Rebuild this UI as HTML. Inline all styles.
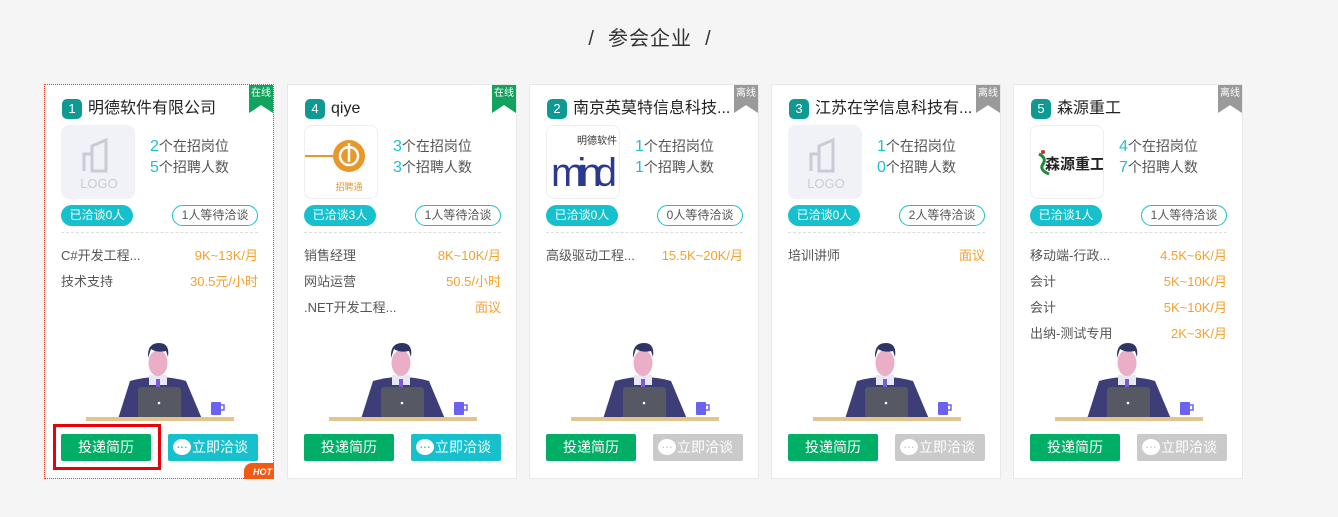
<!DOCTYPE html>
<html><head><meta charset="utf-8"><style>
*{margin:0;padding:0;box-sizing:border-box}
body{width:1338px;height:517px;background:#f5f5f5;font-family:"Liberation Sans","Noto Sans CJK SC",sans-serif;position:relative;overflow:hidden;color:#333}
.title{position:absolute;top:22px;left:0;width:1300px;text-align:center;font-size:20px;color:#333;letter-spacing:1px}
.card{position:absolute;top:84px;width:230px;height:395px;background:#fff;border:1px solid #e8e8e8}
.card.sel{border:1px dotted #ff3b1f}
.rib{position:absolute;right:0;top:0;width:24px;height:28px;color:#fff;font-size:10px;text-align:center;line-height:18px;clip-path:polygon(0 0,100% 0,100% 100%,50% 72%,0 100%)}
.on{background:#12a35e}.off{background:#9a9a9a}
.num{position:absolute;left:17px;top:14px;width:20px;height:20px;border-radius:5px;background:#0e9a92;color:#fff;font-size:13px;text-align:center;line-height:20px}
.name{position:absolute;left:43px;top:14px;font-size:16px;color:#222;line-height:20px;white-space:nowrap}
.logo{position:absolute;left:16px;top:40px;width:74px;height:74px;border:1px solid #eee;border-radius:8px;overflow:hidden;background:#fff}
.stat{position:absolute;left:105px;font-size:14px;color:#555;line-height:18px}
.stat b{font-weight:normal;color:#1ec0d0;font-size:16px}
.p1{position:absolute;left:16px;top:120px;width:72px;height:21px;border-radius:11px;background:#16c0cc;color:#fff;font-size:12px;text-align:center;line-height:21px}
.p2{position:absolute;right:15px;top:120px;width:86px;height:21px;border-radius:11px;border:1px solid #16c0cc;color:#555;font-size:12px;text-align:center;line-height:19px}
.dash{position:absolute;left:16px;right:15px;top:147px;border-top:1px dashed #ddd}
.job{position:absolute;left:16px;right:15px;font-size:13px;color:#555;line-height:18px}
.job span{position:absolute;right:0;top:0;color:#f5a02a}
.b1{position:absolute;left:16px;top:349px;width:90px;height:27px;background:#00ae66;color:#fff;font-size:14px;text-align:center;line-height:27px;border-radius:2px}
.b2{position:absolute;right:15px;top:349px;width:90px;height:27px;background:#16c0cc;color:#fff;font-size:14px;line-height:27px;border-radius:2px;padding-left:24px}
.b2.g{background:#cacaca}
.b2 i{position:absolute;left:5px;top:5px;width:18px;height:16px;background:#fff;border-radius:50%}
.b2 i:after{content:"···";position:absolute;left:3px;top:-6px;font-style:normal;font-size:14px;color:#16c0cc;letter-spacing:-1px}
.b2.g i:after{color:#cacaca}
svg.ill{position:absolute;left:0;top:0}
</style></head><body>
<div class="title">/&nbsp;&nbsp;参会企业&nbsp;&nbsp;/</div>

<div class="card sel" style="left:44px">
<div class="rib on">在线</div><div class="num">1</div><div class="name">明德软件有限公司</div>
<div class="logo" style="background:#f0f2f8;border-color:#f0f2f8"><svg width="74" height="74"><path d="M30 45V20l14-6v31zM22 45V28h8v17" fill="none" stroke="#c9ccd6" stroke-width="3"/><text x="37" y="62" font-size="13" fill="#c9ccd6" text-anchor="middle" font-family="Liberation Sans">LOGO</text></svg></div>
<div class="stat" style="top:52px"><b>2</b>个在招岗位</div><div class="stat" style="top:73px"><b>5</b>个招聘人数</div>
<div class="p1">已洽谈0人</div><div class="p2">1人等待洽谈</div><div class="dash"></div>
<div class="job" style="top:162px">C#开发工程...<span>9K~13K/月</span></div>
<div class="job" style="top:188px">技术支持<span>30.5元/小时</span></div>
<svg class="ill" width="230" height="395"><path d="M73 334L85 296Q113 288 141 296L157 334Z" fill="#3d3d78"/><rect x="104" y="290" width="18" height="10" fill="#e8e8f4"/><rect x="111" y="294" width="4" height="8" fill="#7b5cd6"/><ellipse cx="113" cy="278" rx="9.5" ry="13" fill="#eaaec7"/><path d="M103 273Q102 258 114 258Q125 258 123 272L121 266Q112 268 106 264Z" fill="#2e3466"/><rect x="93" y="302" width="43" height="32" rx="3" fill="#565864"/><circle cx="114" cy="318" r="1.3" fill="#fff"/><rect x="41" y="332" width="148" height="4" fill="#e3c48d"/><rect x="166" y="317" width="10" height="13" rx="1" fill="#6b63f0"/><path d="M176 320h3v5h-3" fill="none" stroke="#6b63f0" stroke-width="1.5"/></svg>
<div class="b1">投递简历</div><div class="b2"><i></i>立即洽谈</div>
<div style="position:absolute;left:8px;top:339px;width:108px;height:46px;border:3px solid #e8000b"></div>
<div style="position:absolute;right:-1px;bottom:-1px;width:30px;height:16px;background:#f05a14;color:#fff;font-size:9px;font-weight:bold;font-style:italic;text-align:right;padding-right:2px;line-height:18px;border-radius:8px 0 0 0">HOT</div>
</div>

<div class="card" style="left:287px">
<div class="rib on">在线</div><div class="num">4</div><div class="name">qiye</div>
<div class="logo"><svg width="74" height="74"><line x1="0" y1="30" x2="28" y2="30" stroke="#e8972a" stroke-width="2"/><circle cx="44" cy="30" r="16" fill="#e8972a"/><circle cx="44" cy="30" r="9" fill="none" stroke="#fff" stroke-width="2.5"/><line x1="44" y1="17" x2="44" y2="36" stroke="#fff" stroke-width="2.5"/><text x="44" y="64" font-size="9" fill="#e8972a" text-anchor="middle">招聘通</text></svg></div>
<div class="stat" style="top:52px"><b>3</b>个在招岗位</div><div class="stat" style="top:73px"><b>3</b>个招聘人数</div>
<div class="p1">已洽谈3人</div><div class="p2">1人等待洽谈</div><div class="dash"></div>
<div class="job" style="top:162px">销售经理<span>8K~10K/月</span></div>
<div class="job" style="top:188px">网站运营<span>50.5/小时</span></div>
<div class="job" style="top:214px">.NET开发工程...<span>面议</span></div>
<svg class="ill" width="230" height="395"><path d="M73 334L85 296Q113 288 141 296L157 334Z" fill="#3d3d78"/><rect x="104" y="290" width="18" height="10" fill="#e8e8f4"/><rect x="111" y="294" width="4" height="8" fill="#7b5cd6"/><ellipse cx="113" cy="278" rx="9.5" ry="13" fill="#eaaec7"/><path d="M103 273Q102 258 114 258Q125 258 123 272L121 266Q112 268 106 264Z" fill="#2e3466"/><rect x="93" y="302" width="43" height="32" rx="3" fill="#565864"/><circle cx="114" cy="318" r="1.3" fill="#fff"/><rect x="41" y="332" width="148" height="4" fill="#e3c48d"/><rect x="166" y="317" width="10" height="13" rx="1" fill="#6b63f0"/><path d="M176 320h3v5h-3" fill="none" stroke="#6b63f0" stroke-width="1.5"/></svg>
<div class="b1">投递简历</div><div class="b2"><i></i>立即洽谈</div>
</div>

<div class="card" style="left:529px">
<div class="rib off">离线</div><div class="num">2</div><div class="name">南京英莫特信息科技...</div>
<div class="logo"><svg width="74" height="74"><text x="50" y="18" font-size="10" fill="#333" text-anchor="middle">明德软件</text><text x="37" y="60" font-size="40" fill="#2b3a8e" text-anchor="middle" textLength="66" font-family="Liberation Sans">mind</text></svg></div>
<div class="stat" style="top:52px"><b>1</b>个在招岗位</div><div class="stat" style="top:73px"><b>1</b>个招聘人数</div>
<div class="p1">已洽谈0人</div><div class="p2">0人等待洽谈</div><div class="dash"></div>
<div class="job" style="top:162px">高级驱动工程...<span>15.5K~20K/月</span></div>
<svg class="ill" width="230" height="395"><path d="M73 334L85 296Q113 288 141 296L157 334Z" fill="#3d3d78"/><rect x="104" y="290" width="18" height="10" fill="#e8e8f4"/><rect x="111" y="294" width="4" height="8" fill="#7b5cd6"/><ellipse cx="113" cy="278" rx="9.5" ry="13" fill="#eaaec7"/><path d="M103 273Q102 258 114 258Q125 258 123 272L121 266Q112 268 106 264Z" fill="#2e3466"/><rect x="93" y="302" width="43" height="32" rx="3" fill="#565864"/><circle cx="114" cy="318" r="1.3" fill="#fff"/><rect x="41" y="332" width="148" height="4" fill="#e3c48d"/><rect x="166" y="317" width="10" height="13" rx="1" fill="#6b63f0"/><path d="M176 320h3v5h-3" fill="none" stroke="#6b63f0" stroke-width="1.5"/></svg>
<div class="b1">投递简历</div><div class="b2 g"><i></i>立即洽谈</div>
</div>

<div class="card" style="left:771px">
<div class="rib off">离线</div><div class="num">3</div><div class="name">江苏在学信息科技有...</div>
<div class="logo" style="background:#f0f2f8;border-color:#f0f2f8"><svg width="74" height="74"><path d="M30 45V20l14-6v31zM22 45V28h8v17" fill="none" stroke="#c9ccd6" stroke-width="3"/><text x="37" y="62" font-size="13" fill="#c9ccd6" text-anchor="middle" font-family="Liberation Sans">LOGO</text></svg></div>
<div class="stat" style="top:52px"><b>1</b>个在招岗位</div><div class="stat" style="top:73px"><b>0</b>个招聘人数</div>
<div class="p1">已洽谈0人</div><div class="p2">2人等待洽谈</div><div class="dash"></div>
<div class="job" style="top:162px">培训讲师<span>面议</span></div>
<svg class="ill" width="230" height="395"><path d="M73 334L85 296Q113 288 141 296L157 334Z" fill="#3d3d78"/><rect x="104" y="290" width="18" height="10" fill="#e8e8f4"/><rect x="111" y="294" width="4" height="8" fill="#7b5cd6"/><ellipse cx="113" cy="278" rx="9.5" ry="13" fill="#eaaec7"/><path d="M103 273Q102 258 114 258Q125 258 123 272L121 266Q112 268 106 264Z" fill="#2e3466"/><rect x="93" y="302" width="43" height="32" rx="3" fill="#565864"/><circle cx="114" cy="318" r="1.3" fill="#fff"/><rect x="41" y="332" width="148" height="4" fill="#e3c48d"/><rect x="166" y="317" width="10" height="13" rx="1" fill="#6b63f0"/><path d="M176 320h3v5h-3" fill="none" stroke="#6b63f0" stroke-width="1.5"/></svg>
<div class="b1">投递简历</div><div class="b2 g"><i></i>立即洽谈</div>
</div>

<div class="card" style="left:1013px">
<div class="rib off">离线</div><div class="num">5</div><div class="name">森源重工</div>
<div class="logo"><svg width="74" height="74"><path d="M8 28q8 4 4 10t6 10" fill="none" stroke="#1a8a3a" stroke-width="3"/><circle cx="12" cy="26" r="2" fill="#d22"/><text x="44" y="43" font-size="15" font-weight="bold" fill="#222" text-anchor="middle">森源重工</text></svg></div>
<div class="stat" style="top:52px"><b>4</b>个在招岗位</div><div class="stat" style="top:73px"><b>7</b>个招聘人数</div>
<div class="p1">已洽谈1人</div><div class="p2">1人等待洽谈</div><div class="dash"></div>
<div class="job" style="top:162px">移动端-行政...<span>4.5K~6K/月</span></div>
<div class="job" style="top:188px">会计<span>5K~10K/月</span></div>
<div class="job" style="top:214px">会计<span>5K~10K/月</span></div>
<div class="job" style="top:240px">出纳-测试专用<span>2K~3K/月</span></div>
<svg class="ill" width="230" height="395"><path d="M73 334L85 296Q113 288 141 296L157 334Z" fill="#3d3d78"/><rect x="104" y="290" width="18" height="10" fill="#e8e8f4"/><rect x="111" y="294" width="4" height="8" fill="#7b5cd6"/><ellipse cx="113" cy="278" rx="9.5" ry="13" fill="#eaaec7"/><path d="M103 273Q102 258 114 258Q125 258 123 272L121 266Q112 268 106 264Z" fill="#2e3466"/><rect x="93" y="302" width="43" height="32" rx="3" fill="#565864"/><circle cx="114" cy="318" r="1.3" fill="#fff"/><rect x="41" y="332" width="148" height="4" fill="#e3c48d"/><rect x="166" y="317" width="10" height="13" rx="1" fill="#6b63f0"/><path d="M176 320h3v5h-3" fill="none" stroke="#6b63f0" stroke-width="1.5"/></svg>
<div class="b1">投递简历</div><div class="b2 g"><i></i>立即洽谈</div>
</div>
</body></html>
